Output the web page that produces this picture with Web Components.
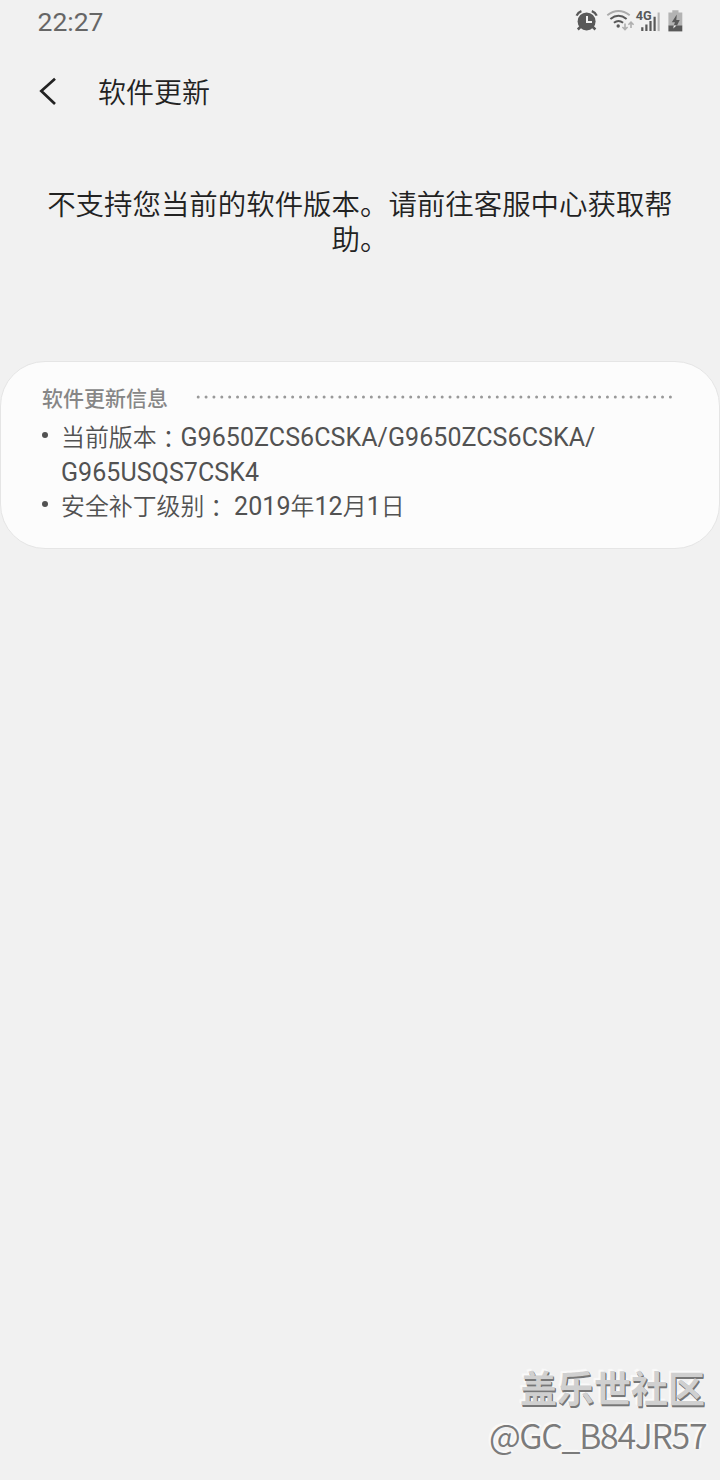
<!DOCTYPE html>
<html lang="zh-CN">
<head>
<meta charset="utf-8">
<title>软件更新</title>
<style>
html, body { margin: 0; height: 1480px; background: #f1f1f1; }
body { font-family: Roboto, "Noto Sans CJK SC", sans-serif; overflow: hidden; }
</style>
</head>
<body>
<update-screen></update-screen>
<script>
const define = (name, html) => {
  const t = document.createElement('template');
  t.innerHTML = html;
  customElements.define(name, class extends HTMLElement {
    constructor() {
      super();
      this.attachShadow({ mode: 'open' }).append(t.content.cloneNode(true));
    }
  });
};

define('status-icons', `
<style>
:host { display: block; width: 130px; height: 44px; }
svg { display: block; }
text { font: 700 12.5px Roboto, sans-serif; }
</style>
<svg width="130" height="44" viewBox="0 0 130 44">
  <g fill="none" stroke="#595959">
    <circle cx="21.6" cy="21.4" r="9" fill="#595959" stroke="none"/>
    <path d="M11.6 15.6Q13 12.4 16.4 11.2M26.8 11.2Q30.3 12.4 31.7 15.6" stroke-width="2.3"/>
    <path d="M15.8 26.5l-3 3M27.4 26.5l3 3" stroke-width="2.5"/>
    <path d="M22 16v6h5" stroke="#f1f1f1" stroke-width="2"/>
  </g>
  <g fill="none" stroke="#595959" stroke-width="2">
    <path d="M42.3 15.2Q53.5 6.8 64.7 15.2" stroke="#ababab"/>
    <path d="M45.4 19Q53.5 12.6 61.6 19M48.9 22.8Q53.5 19.2 58.1 22.8"/>
    <circle cx="53.2" cy="26" r="1.7" fill="#595959" stroke="none"/>
  </g>
  <g fill="none" stroke="#b0b0b0" stroke-width="1.6">
    <path d="M60 23.5v6M57.4 27l2.6 2.6 2.6-2.6M66 28v-6M63.4 24.8l2.6-2.6 2.6 2.6"/>
  </g>
  <text x="70.7" y="20" fill="#595959" textLength="16" lengthAdjust="spacingAndGlyphs">4G</text>
  <g fill="#595959">
    <path d="M76.2 27.2h2.2v3.9h-2.2zM80.3 24.5h2.2v6.6h-2.2zM84.4 21h2.2v10.1h-2.2zM88.5 16.7h2.2v14.4h-2.2z"/>
    <path d="M92.6 12.5h2.1v18.6h-2.1z" fill="#b5b5b5"/>
  </g>
  <path d="M107.3 10.2h6.2v2.3h3.8v13h-13.9v-13h3.9z" fill="#b3b3b3"/>
  <path d="M103.4 25.4h13.9v6h-13.9z" fill="#595959"/>
  <path d="M111.8 14.5l-5 7.8h3.2l-1.2 3.1h3.2l2.7-5.5h-3.4z" fill="#595959"/>
  <path d="M108.8 25.4l-.5 3.2 3.2-3.2z" fill="#f1f1f1"/>
</svg>`);

define('status-bar', `
<style>
:host { display: flex; justify-content: space-between; height: 44px; padding: 0 25px 0 37.5px; box-sizing: border-box; }
time { font-size: 26.5px; line-height: 43px; color: #666; }
</style>
<time><slot></slot></time><status-icons></status-icons>`);

define('title-bar', `
<style>
:host { display: flex; align-items: flex-start; height: 96px; box-sizing: border-box; padding: 32px 0 0 38px; }
svg { flex: none; width: 20px; height: 30px; margin-right: 40px; }
h1 { margin: -1px 0 0; font-size: 28px; line-height: 38px; font-weight: 350; color: #222; }
</style>
<svg viewBox="0 0 20 30"><path d="M17 2.7L3.3 15 17 28" fill="none" stroke="#222" stroke-width="2.7"/></svg>
<h1><slot></slot></h1>`);

define('update-message', `
<style>
:host { display: block; margin-top: 48px; height: 173px; padding: 0 40px; font-size: 28.45px; line-height: 35px; font-weight: 350; color: #222; text-align: center; }
</style><slot></slot>`);

define('info-item', `
<style>
:host { display: flex; font-size: 23.9px; line-height: 35px; font-weight: 350; color: #525252; }
i { flex: none; width: 6px; height: 6px; border-radius: 50%; background: #525252; margin: 11px 13px 0 0; }
::slotted(b) { font-weight: 400; font-size: 25px; line-height: 24px; letter-spacing: .07px; }
::slotted(span) { font-family: "Noto Sans CJK TC", sans-serif; line-height: 0; vertical-align: -2px; }
</style><i></i><div><slot></slot></div>`);

define('info-card', `
<style>
:host { display: block; box-sizing: border-box; height: 188px; border: 1px solid #e5e5e5; border-radius: 45px; background: #fcfcfc; padding: 20px 45px 0 41px; }
header { display: flex; align-items: flex-start; height: 32px; margin-bottom: 7px; }
h2 { margin: 1px 0 0; font-size: 21px; line-height: 32px; font-weight: 500; color: #868686; flex: 1; }
svg { display: block; width: 478px; height: 4px; margin-top: 13px; }
::slotted(info-item:last-child) { margin-top: -1px; }
</style>
<header><h2><slot name="title"></slot></h2>
<svg><path d="M2.2 2H477" stroke="#999" stroke-width="3" stroke-linecap="round" stroke-dasharray="0 7.87"/></svg></header>
<slot></slot>`);

define('page-watermark', `
<style>
:host { display: flex; flex-direction: column; align-items: flex-end; margin-top: auto; padding: 0 15px 21px 0; font-family: "Noto Sans CJK SC", sans-serif; }
strong { font-size: 37px; line-height: 48px; font-weight: 700; color: #d0d0d0; text-shadow: 1px 1px #777, 1px 2px #777, -1px -1px 1px #fafafa, -2px -2px 1px #fafafa; }
span { font: 350 34px/48px "Noto Sans CJK SC", sans-serif; letter-spacing: -1.3px; margin-right: -1.3px; color: #7b7b7b; text-shadow: -2px -1px #faf8f6, -2px -2px 1px #fafafa, 2px -1px 1px #fafafa; }
</style>
<strong><slot name="site"></slot></strong><span><slot></slot></span>`);

define('update-screen', `
<style>
:host { display: flex; flex-direction: column; width: 720px; height: 1480px; background: #f1f1f1; }
</style>
<status-bar>22:27</status-bar>
<title-bar>软件更新</title-bar>
<update-message>不支持您当前的软件版本。请前往客服中心获取帮<br>助。</update-message>
<info-card><span slot="title">软件更新信息</span>
<info-item>当前版本<span lang="zh-TW">：</span><b>G9650ZCS6CSKA/G9650ZCS6CSKA/<br>G965USQS7CSK4</b></info-item>
<info-item>安全补丁级别<span lang="zh-TW">：</span> <b>2019</b>年<b>12</b>月<b>1</b>日</info-item></info-card>
<page-watermark><span slot="site">盖乐世社区</span>@GC_B84JR57</page-watermark>`);
</script>
</body>
</html>
